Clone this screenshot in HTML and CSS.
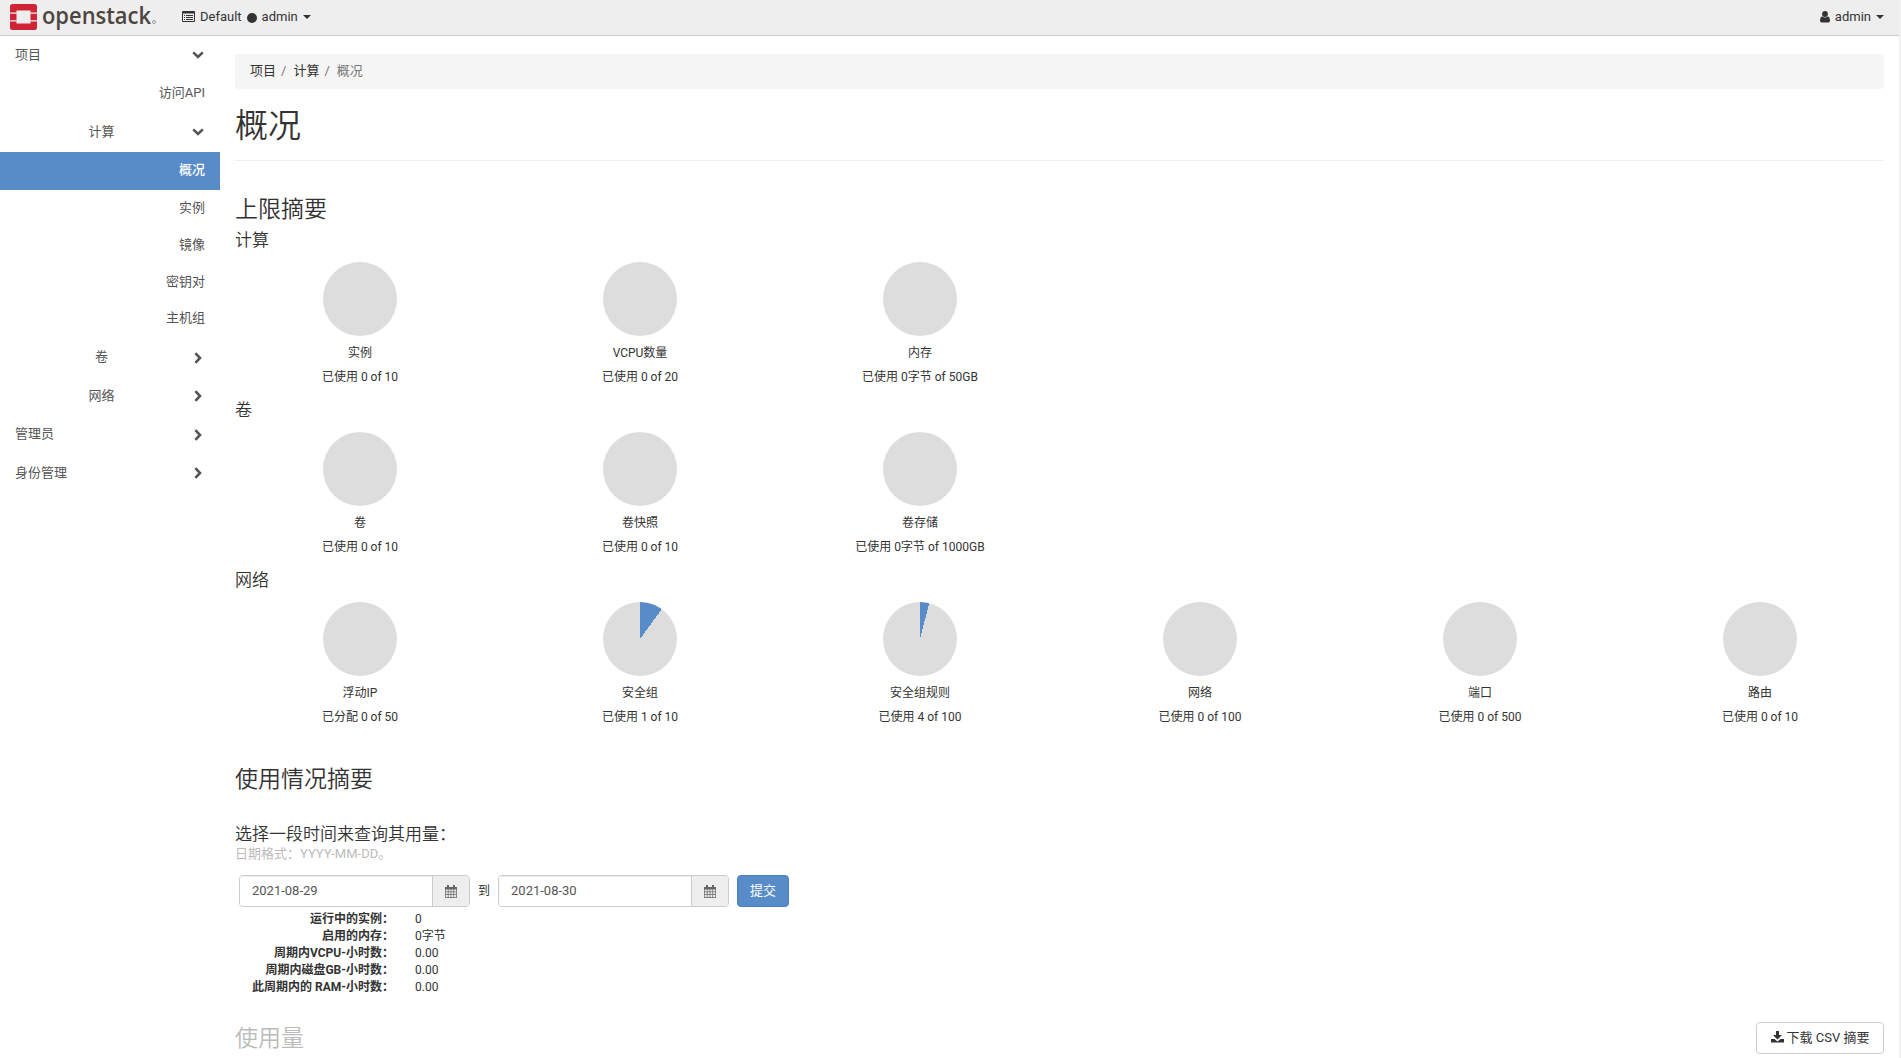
FILE: index.html
```html
<!DOCTYPE html>
<html lang="zh-CN">
<head>
    <meta charset="UTF-8">
    <meta name="viewport" content="width=device-width, initial-scale=1.0">
    <title>概况 - OpenStack Dashboard</title>
    <link rel="stylesheet" href="styles.css">
</head>
<body>
    <svg class="icon-defs">
        <symbol id="chevron-down" viewBox="0 0 12 8">
            <path d="M1.2 1.4L6 6L10.8 1.4" fill="none" stroke="currentColor" stroke-width="2.6"/>
        </symbol>
        <symbol id="chevron-right" viewBox="0 0 8 12">
            <path d="M1.4 1.2L6 6L1.4 10.8" fill="none" stroke="currentColor" stroke-width="2.6"/>
        </symbol>
        <symbol id="calendar" viewBox="0 0 12 13">
            <path fill="currentColor" fill-rule="evenodd" d="M0 2h2V0h2v2h4V0h2v2h2v11H0zM.7 4.500v2h2.100v-2zM3.500 4.500v2h2.100v-2zM6.300 4.500v2h2.100v-2zM9.100 4.500v2h2.200v-2zM.7 7.300v2h2.100v-2zM3.500 7.300v2h2.100v-2zM6.300 7.300v2h2.100v-2zM9.100 7.300v2h2.200v-2zM.7 10.100v2.100h2.100v-2.100zM3.500 10.100v2.100h2.100v-2.100zM6.300 10.100v2.100h2.100v-2.100zM9.100 10.100v2.100h2.200v-2.100z"/>
        </symbol>
    </svg>

    <nav class="navbar">
        <a class="brand">
            <svg class="brand-mark" viewBox="0 0 27 26">
                <g fill="#cf2436">
                    <path d="M2.500 0H24.500a2.500 2.500 0 0 1 2.500 2.500V8.500H20.500V6.500H6.500V8.500H0V2.500A2.500 2.500 0 0 1 2.500 0z"/>
                    <path d="M0 9.800H6.500V16.200H0zM20.500 9.800H27V16.200H20.500z"/>
                    <path d="M0 17.500H6.500V19.500H20.500V17.500H27V23.500A2.500 2.500 0 0 1 24.500 26H2.500A2.500 2.500 0 0 1 0 23.500z"/>
                </g>
            </svg>
            <svg class="brand-name" viewBox="0 0 116 35">
                <text x="0" y="24" textLength="109" lengthAdjust="spacingAndGlyphs">openstack</text>
                <circle cx="112" cy="22" r="1.500" fill="none" stroke="#999"/>
            </svg>
        </a>
        <div class="context">
            <svg class="list-icon" viewBox="0 0 13 11">
                <path fill="currentColor" fill-rule="evenodd" d="M1 0h11a1 1 0 0 1 1 1v9a1 1 0 0 1-1 1H1a1 1 0 0 1-1-1V1a1 1 0 0 1 1-1zM1 2.500V10h11V2.500z"/>
                <path stroke="currentColor" d="M2 4.500h1M4 4.500h7M2 6.500h1M4 6.500h7M2 8.500h1M4 8.500h7"/>
            </svg>
            <span>Default</span>
            <i class="dot"></i>
            <span>admin</span>
            <i class="caret"></i>
        </div>
        <div class="user">
            <svg class="user-icon" viewBox="0 0 10 12">
                <circle cx="5" cy="3" r="2.900" fill="currentColor"/>
                <path fill="currentColor" d="M2 5.200Q5 7.600 8 5.200Q10 6 10 9.500Q10 11.500 8.300 11.500H1.700Q0 11.500 0 9.500Q0 6 2 5.200z"/>
            </svg>
            <span>admin</span>
            <i class="caret"></i>
        </div>
    </nav>

    <div class="page">
        <aside class="sidebar">
            <a class="group"><span>项目</span><svg class="chev down"><use href="#chevron-down"/></svg></a>
            <a class="group leaf"><span>访问API</span></a>
            <a class="group sub"><span>计算</span><svg class="chev down"><use href="#chevron-down"/></svg></a>
            <div class="panels">
                <a class="panel active"><span>概况</span></a>
                <a class="panel"><span>实例</span></a>
                <a class="panel"><span>镜像</span></a>
                <a class="panel"><span>密钥对</span></a>
                <a class="panel"><span>主机组</span></a>
            </div>
            <a class="group sub"><span>卷</span><svg class="chev right"><use href="#chevron-right"/></svg></a>
            <a class="group sub"><span>网络</span><svg class="chev right"><use href="#chevron-right"/></svg></a>
            <a class="group"><span>管理员</span><svg class="chev right"><use href="#chevron-right"/></svg></a>
            <a class="group"><span>身份管理</span><svg class="chev right"><use href="#chevron-right"/></svg></a>
        </aside>

        <main class="content">
            <ol class="breadcrumb">
                <li>项目</li>
                <li>计算</li>
                <li class="current">概况</li>
            </ol>
            <h1 class="page-title">概况</h1>

            <h2 class="section-title">上限摘要</h2>
            <section class="quota">
                <h3 class="quota-title">计算</h3>
                <div class="charts">
                    <div class="chart"><div class="pie"></div><p>实例</p><p>已使用 0 of 10</p></div>
                    <div class="chart"><div class="pie"></div><p>VCPU数量</p><p>已使用 0 of 20</p></div>
                    <div class="chart"><div class="pie"></div><p>内存</p><p>已使用 0字节 of 50GB</p></div>
                </div>
            </section>
            <section class="quota">
                <h3 class="quota-title">卷</h3>
                <div class="charts">
                    <div class="chart"><div class="pie"></div><p>卷</p><p>已使用 0 of 10</p></div>
                    <div class="chart"><div class="pie"></div><p>卷快照</p><p>已使用 0 of 10</p></div>
                    <div class="chart"><div class="pie"></div><p>卷存储</p><p>已使用 0字节 of 1000GB</p></div>
                </div>
            </section>
            <section class="quota">
                <h3 class="quota-title">网络</h3>
                <div class="charts">
                    <div class="chart"><div class="pie"></div><p>浮动IP</p><p>已分配 0 of 50</p></div>
                    <div class="chart"><div class="pie" style="--used: 10%"></div><p>安全组</p><p>已使用 1 of 10</p></div>
                    <div class="chart"><div class="pie" style="--used: 4%"></div><p>安全组规则</p><p>已使用 4 of 100</p></div>
                    <div class="chart"><div class="pie"></div><p>网络</p><p>已使用 0 of 100</p></div>
                    <div class="chart"><div class="pie"></div><p>端口</p><p>已使用 0 of 500</p></div>
                    <div class="chart"><div class="pie"></div><p>路由</p><p>已使用 0 of 10</p></div>
                </div>
            </section>

            <h2 class="section-title usage-title">使用情况摘要</h2>
            <form class="usage-form">
                <h3 class="form-title">选择一段时间来查询其用量：</h3>
                <p class="help">日期格式：YYYY-MM-DD。</p>
                <div class="form-row">
                    <div class="date">
                        <input type="text" value="2021-08-29">
                        <span class="addon"><svg class="cal"><use href="#calendar"/></svg></span>
                    </div>
                    <span class="to">到</span>
                    <div class="date">
                        <input type="text" value="2021-08-30">
                        <span class="addon"><svg class="cal"><use href="#calendar"/></svg></span>
                    </div>
                    <button type="button" class="btn btn-primary">提交</button>
                </div>
            </form>
            <dl class="totals">
                <dt>运行中的实例：</dt><dd>0</dd>
                <dt>启用的内存：</dt><dd>0字节</dd>
                <dt>周期内VCPU-小时数：</dt><dd>0.00</dd>
                <dt>周期内磁盘GB-小时数：</dt><dd>0.00</dd>
                <dt>此周期内的 RAM-小时数：</dt><dd>0.00</dd>
            </dl>
            <div class="table-head">
                <h2 class="table-title">使用量</h2>
                <button type="button" class="btn btn-default">
                    <svg class="download" viewBox="0 0 13 12">
                        <path fill="currentColor" d="M5 0h3v4h3L6.500 8.500 2 4h3z"/>
                        <path fill="currentColor" d="M0 8h3.500l3 2.500L9.500 8H13v3.500H0z"/>
                    </svg>
                    下载 CSV 摘要
                </button>
            </div>
        </main>
    </div>
</body>
</html>
```
FILE: styles.css
```css
* {
    box-sizing: border-box;
}
body {
    margin: 0;
    height: 1058px;
    overflow: hidden;
    border-right: 2px solid #f1f1f1;
    background-color: #fff;
    color: #333;
    font-family: Roboto, "Noto Sans CJK SC", sans-serif;
    font-size: 12px;
    line-height: 17px;
}
h1, h2, h3, p, ol, dl, dd {
    margin: 0;
    padding: 0;
    font-weight: 350;
}
.icon-defs {
    display: none;
}
.navbar {
    display: flex;
    align-items: center;
    height: 36px;
    padding: 0 15px 0 10px;
    background-color: #eee;
    border-bottom: 1px solid #ccc;
    font-size: 13px;
}
.brand {
    display: flex;
    align-items: center;
    width: 172px;
}
.brand-mark {
    width: 27px;
    height: 26px;
    margin: 0 5px 1px 0;
}
.brand-name {
    width: 116px;
    height: 35px;
    overflow: visible;
    font-family: "Open Sans", sans-serif;
    font-size: 23px;
    font-weight: 600;
    fill: #4d4540;
}
.context, .user {
    display: flex;
    align-items: center;
    height: 31px;
    margin-bottom: 2px;
}
.list-icon {
    width: 13px;
    height: 11px;
    margin-right: 5px;
}
.dot {
    width: 10px;
    height: 10px;
    margin: 3px 5px 0;
    border-radius: 50%;
    background-color: #333;
}
.caret {
    margin-left: 5px;
    border: 4px solid transparent;
    border-top-color: #333;
    border-bottom: 0;
}
.user {
    margin-left: auto;
}
.user-icon {
    width: 10px;
    height: 12px;
    margin-right: 5px;
}
.page {
    display: flex;
}
.sidebar {
    flex: none;
    width: 220px;
    color: #555;
    font-size: 13px;
}
.group {
    display: flex;
    align-items: center;
    justify-content: space-between;
    height: 38.6px;
    padding: 0 15px;
}
.group span, .panel span {
    padding-bottom: 2px;
}
.leaf {
    justify-content: flex-end;
}
.sub span {
    width: 173px;
    text-align: center;
}
.chev.down {
    width: 12px;
    height: 8px;
    margin-right: 1px;
}
.chev.right {
    width: 8px;
    height: 12px;
    margin-right: 3px;
}
.panels {
    padding-bottom: 1px;
}
.panel {
    display: flex;
    align-items: center;
    justify-content: flex-end;
    height: 36.9px;
    padding-right: 15px;
}
.panel.active {
    height: 38px;
    background-color: #588cc9;
    color: #fff;
    font-weight: 500;
}
.content {
    flex: 1;
    min-width: 0;
    padding: 18px 15px 0;
}
.breadcrumb {
    display: flex;
    align-items: center;
    height: 35px;
    padding: 0 15px 2px;
    border-radius: 4px;
    background-color: #f5f5f5;
    font-size: 13px;
    list-style: none;
}
.breadcrumb li {
    font-weight: 400;
}
.breadcrumb li + li::before {
    content: "/";
    padding: 0 7px 0 5px;
    color: #777;
}
.breadcrumb .current {
    color: #777;
}
.page-title {
    height: 72px;
    border-bottom: 1px solid #eee;
    font-size: 33px;
    line-height: 73px;
}
.section-title {
    margin-top: 34px;
    font-size: 23px;
    line-height: 30px;
}
.quota {
    height: 170px;
}
.quota-title {
    padding-top: 5px;
    font-size: 17px;
    line-height: 20px;
}
.charts {
    display: grid;
    grid-template-columns: repeat(6, 280px);
    margin: 12px -15px 0;
}
.chart {
    display: flex;
    flex-direction: column;
    align-items: center;
}
.chart p {
    margin-bottom: 7px;
    font-weight: 400;
}
.pie {
    --used: 0%;
    width: 74px;
    height: 74px;
    margin-bottom: 9px;
    border-radius: 50%;
    background: conic-gradient(#588cc9 var(--used), #ddd 0);
}
.usage-title {
    margin-top: 30px;
}
.form-title {
    margin-top: 28px;
    font-size: 17px;
    line-height: 22px;
}
.help {
    color: #bbb;
    font-size: 13px;
    font-weight: 400;
}
.form-row {
    display: flex;
    align-items: center;
    margin-top: 13px;
    padding-left: 4px;
}
.date {
    display: flex;
    width: 231px;
    height: 32px;
    border: 1px solid #ccc;
    border-radius: 4px;
    overflow: hidden;
}
.date input {
    width: 193px;
    padding: 0 12px 2px;
    border: 0;
    border-right: 1px solid #ccc;
    color: #555;
    font: 13px Roboto, sans-serif;
    box-shadow: inset 0 1px 1px rgba(0, 0, 0, 0.075);
}
.addon {
    display: flex;
    flex: 1;
    align-items: center;
    justify-content: center;
    background-color: #eee;
    color: #666;
}
.cal {
    width: 12px;
    height: 13px;
}
.to {
    margin: 0 8px;
}
.btn {
    display: flex;
    align-items: center;
    justify-content: center;
    height: 32px;
    padding: 0 0 3px;
    border: 1px solid #ccc;
    border-radius: 4px;
    font-family: inherit;
    font-size: 13px;
}
.btn-primary {
    width: 52px;
    margin-left: 8px;
    border-color: #4a80c0;
    background-color: #588cc9;
    color: #fff;
}
.btn-default {
    width: 128px;
    background-color: #fff;
    color: #333;
}
.totals {
    display: grid;
    grid-template-columns: 159px auto;
    column-gap: 21px;
    margin-top: 4px;
}
.totals dt {
    text-align: right;
    font-weight: 700;
    white-space: nowrap;
}
.totals dd {
    font-weight: 400;
}
.table-head {
    display: flex;
    align-items: center;
    justify-content: space-between;
    margin-top: 26px;
}
.table-title {
    padding-top: 2px;
    color: #bbb;
    font-size: 23px;
    line-height: 30px;
}
.download {
    width: 13px;
    height: 12px;
    margin-right: 3px;
}
```
